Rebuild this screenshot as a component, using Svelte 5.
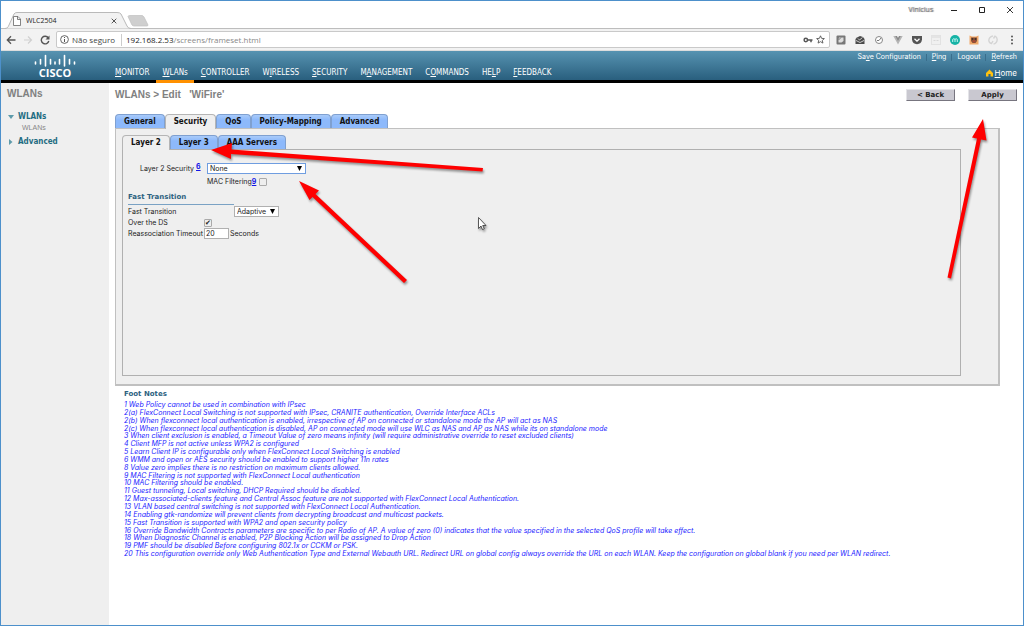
<script>
  const nav = [
    ['', 'M', 'ONITOR'],
    ['', 'W', 'LANs'],
    ['', 'C', 'ONTROLLER'],
    ['W', 'I', 'RELESS'],
    ['', 'S', 'ECURITY'],
    ['M', 'A', 'NAGEMENT'],
    ['C', 'O', 'MMANDS'],
    ['HE', 'L', 'P'],
    ['', 'F', 'EEDBACK'],
  ];
  const tabs = ['General', 'Security', 'QoS', 'Policy-Mapping', 'Advanced'];
  const subTabs = ['Layer 2', 'Layer 3', 'AAA Servers'];
  let tab = $state('Security');
  let subTab = $state('Layer 2');
  let security = $state('None');
  let transition = $state('Adaptive');
  let macFiltering = $state(false);
  let overDs = $state(true);
  let timeout = $state('20');
  const notes = [
    '1 Web Policy cannot be used in combination with IPsec',
    '2(a) FlexConnect Local Switching is not supported with IPsec, CRANITE authentication, Override Interface ACLs',
    '2(b) When flexconnect local authentication is enabled, irrespective of AP on connected or standalone mode the AP will act as NAS',
    '2(c) When flexconnect local authentication is disabled, AP on connected mode will use WLC as NAS and AP as NAS while its on standalone mode',
    '3 When client exclusion is enabled, a Timeout Value of zero means infinity (will require administrative override to reset excluded clients)',
    '4 Client MFP is not active unless WPA2 is configured',
    '5 Learn Client IP is configurable only when FlexConnect Local Switching is enabled',
    '6 WMM and open or AES security should be enabled to support higher 11n rates',
    '8 Value zero implies there is no restriction on maximum clients allowed.',
    '9 MAC Filtering is not supported with FlexConnect Local authentication',
    '10 MAC Filtering should be enabled.',
    '11 Guest tunneling, Local switching, DHCP Required should be disabled.',
    '12 Max-associated-clients feature and Central Assoc feature are not supported with FlexConnect Local Authentication.',
    '13 VLAN based central switching is not supported with FlexConnect Local Authentication.',
    '14 Enabling gtk-randomize will prevent clients from decrypting broadcast and multicast packets.',
    '15 Fast Transition is supported with WPA2 and open security policy',
    '16 Override Bandwidth Contracts parameters are specific to per Radio of AP. A value of zero (0) indicates that the value specified in the selected QoS profile will take effect.',
    '18 When Diagnostic Channel is enabled, P2P Blocking Action will be assigned to Drop Action',
    '19 PMF should be disabled Before configuring 802.1x or CCKM or PSK.',
    '20 This configuration override only Web Authentication Type and External Webauth URL. Redirect URL on global config always override the URL on each WLAN. Keep the configuration on global blank if you need per WLAN redirect.',
  ];
</script>

<div class="window">
  <div class="titlebar">
    <div class="chrome-tab">
      <svg class="tab-shape" viewBox="0 0 126 17" preserveAspectRatio="none" aria-hidden="true">
        <path d="M0 16.5 C3 16 3 15 4 13 L9 2 Q10 .5 12 .5 H112 Q115 .5 116 2 L122 14 Q123 16.500 126 16.500" fill="#f2f2f2" stroke="#b9b9b9" />
      </svg>
      <svg class="page-icon" width="8" height="10" viewBox="0 0 8 10" aria-hidden="true"><path d="M1 .5H5L7.500 3V9.500H.500V.500ZM4.500 .500V3.500H7.500" fill="#fff" stroke="#666" stroke-width=".8" /></svg>
      <span>WLC2504</span>
      <button class="plain close-tab" aria-label="Close tab"><svg width="6" height="6" viewBox="0 0 6 6"><path d="M.7 .7L5.300 5.300M5.300 .7L.7 5.300" stroke="#555" /></svg></button>
    </div>
    <button class="plain new-tab" aria-label="New tab"><svg width="22" height="12" viewBox="0 0 22 12"><path d="M1 1.500Q1 .5 3 .5H15Q16 .5 17 2L21 10Q21 11 20 11H7Q6 11 5 10Z" fill="#cfcfcf" stroke="#c0c0c0" stroke-width=".7" /></svg></button>
    <div class="controls">
      <span class="user">Vinicius</span>
      <button class="plain" aria-label="Minimize"><svg width="8" height="8" viewBox="0 0 8 8"><path d="M1 4.500H7" stroke="#222" /></svg></button>
      <button class="plain" aria-label="Maximize"><svg width="8" height="8" viewBox="0 0 8 8"><path d="M1.500 1.500H6.500V6.500H1.500Z" fill="none" stroke="#222" /></svg></button>
      <button class="plain" aria-label="Close"><svg width="8" height="8" viewBox="0 0 8 8"><path d="M1 1L7 7M7 1L1 7" stroke="#222" stroke-width=".9" /></svg></button>
    </div>
  </div>

  <div class="toolbar">
    <div class="history">
      <button class="plain" aria-label="Back"><svg width="10" height="10" viewBox="0 0 10 10"><path d="M9.500 5H1.500M5 1.300L1.300 5L5 8.700" fill="none" stroke="#555" stroke-width="1.300" /></svg></button>
      <button class="plain" aria-label="Forward"><svg width="10" height="10" viewBox="0 0 10 10"><path d="M1 5H8.500M5 1.500L8.500 5L5 8.500" fill="none" stroke="#d0d0d0" stroke-width="1.200" /></svg></button>
      <button class="plain" aria-label="Reload"><svg width="10" height="10" viewBox="0 0 10 10"><path d="M8.300 3A3.800 3.800 0 1 0 8.800 6" fill="none" stroke="#555" stroke-width="1.400" /><path d="M9.500 .5V4.500H5.500Z" fill="#555" /></svg></button>
    </div>
    <div class="address">
      <svg width="9" height="9" viewBox="0 0 9 9" aria-hidden="true"><circle cx="4.500" cy="4.500" r="3.900" fill="none" stroke="#555" stroke-width=".9" /><path d="M4.500 4V7M4.500 2V3" stroke="#555" /></svg>
      <span class="secure">Não seguro</span>
      <span class="url"><b>192.168.2.53</b>/screens/frameset.html</span>
      <svg class="key" width="10" height="8" viewBox="0 0 10 8" aria-hidden="true"><circle cx="2.800" cy="4" r="1.700" fill="none" stroke="#555" stroke-width="1.500" /><path d="M4.500 4H9.500M8 4V6.200" stroke="#555" stroke-width="1.500" /></svg>
      <svg width="9" height="9" viewBox="0 0 10 10" aria-hidden="true"><path d="M5 .9L6.200 3.700L9.300 4L7 6L7.700 9L5 7.400L2.300 9L3 6L.7 4L3.800 3.700Z" fill="none" stroke="#555" /></svg>
    </div>
    <div class="extensions">
      <svg viewBox="0 0 10 10" aria-hidden="true"><rect x=".5" y=".5" width="9" height="9" rx="1" fill="#777" /><path d="M3 2.500H7.500V6L5.500 7.500H2.500V5Z" fill="#ddd" /><path d="M2.500 5L5 2.500" stroke="#777" /></svg>
      <svg viewBox="0 0 10 10" aria-hidden="true"><path d="M.5 4L2 2.500L5 1L8 2L9.500 4V9H.500Z" fill="#4a4a4a" /><path d="M1 5.500L5 7.500L9 5.500M3 3.500L4.500 5L7.500 2.500" fill="none" stroke="#eee" stroke-width=".8" /></svg>
      <svg viewBox="0 0 10 10" aria-hidden="true"><circle cx="5" cy="5" r="3.500" fill="#fff" stroke="#888" /><path d="M3 5.500H5L7 3" fill="none" stroke="#777" /></svg>
      <svg viewBox="0 0 10 10" aria-hidden="true"><path d="M.3 1H3.500L5 4L6.500 1H9.700L5 9.500Z" fill="#b5b5b5" /><path d="M2.300 1H4L5 3L6 1H7.700L5 6Z" fill="#888" /></svg>
      <svg viewBox="0 0 10 10" aria-hidden="true"><path d="M0 1H10V4.500Q9.500 9 5 9.200Q.5 9 0 4.500Z" fill="#555" /><path d="M2.500 3.700L5 6.200L7.500 3.700" fill="none" stroke="#fff" stroke-width="1.300" /></svg>
      <svg viewBox="0 0 10 10" aria-hidden="true"><rect x=".5" y=".5" width="9" height="9" fill="#f0f0f0" stroke="#e2e2e2" /><path d="M1 2H9M2.500 5.500H4.500M5.500 5.500H7.500" stroke="#d8d8d8" /></svg>
      <svg viewBox="0 0 10 10" aria-hidden="true"><circle cx="5" cy="5" r="5" fill="#16b3a6" /><path d="M2.700 7V4.400Q3.800 3 5 4.400V7M5 4.400Q6.200 3 7.300 4.400V7" fill="none" stroke="#d8fffa" stroke-width=".9" /></svg>
      <svg viewBox="0 0 10 10" aria-hidden="true"><path d="M.5 .5L3 1.500H7L9.500 .5V9.500H.5Z" fill="#f0a868" /><path d="M2 2.500H8V6L6.500 8H3.500L2 6Z" fill="#8a5138" /><circle cx="3.500" cy="4" r=".8" fill="#222" /><circle cx="6.500" cy="4" r=".8" fill="#222" /><path d="M4.500 5.500H5.500V7H4.500Z" fill="#d8392b" /></svg>
      <svg viewBox="0 0 10 10" aria-hidden="true"><path d="M5 .8Q.8 2 .8 5.500Q1 8 3.500 8.500L5 6M5.500 9.200Q9.200 8 9.200 4.500Q9 2 7 1.200L5.500 3.500" fill="none" stroke="#d4d4d4" stroke-width="1.400" /></svg>
      <svg viewBox="0 0 10 10" aria-hidden="true"><circle cx="5" cy="1.500" r="1" fill="#555" /><circle cx="5" cy="5" r="1" fill="#555" /><circle cx="5" cy="8.500" r="1" fill="#555" /></svg>
    </div>
  </div>

  <header>
    <div class="brand">
      <svg width="42" height="13" viewBox="0 0 42 13" role="img" aria-label="Cisco bridge">
        <path d="M1.500 8V10M6.500 5.500V10M11.500 1.500V12M16.500 5.500V10M21 8V10M25.500 5.500V10M30.500 1.500V12M35.500 5.500V10M40.500 8V10" stroke="#fff" stroke-width="1.600" stroke-linecap="round" />
      </svg>
      <strong>CISCO</strong>
    </div>
    <nav aria-label="Main">
      {#each nav as [pre, key, post], i}
        <a href="#main" class:current={i === 1}>{pre}<u>{key}</u>{post}</a>
      {/each}
    </nav>
    <div class="utility">
      <div class="links">
        <a href="#save">Sa<u>v</u>e Configuration</a><i></i>
        <a href="#ping"><u>P</u>ing</a><i></i>
        <a href="#logout">Logout</a><i></i>
        <a href="#refresh"><u>R</u>efresh</a>
      </div>
      <a class="home" href="#home">
        <svg width="7" height="8" viewBox="0 0 8 8" aria-hidden="true"><path d="M4 0L8 4V8H5.200V5H2.800V8H0V4Z" fill="#ffc20e" /></svg>
        <span><u>H</u>ome</span>
      </a>
    </div>
  </header>

  <div class="body">
    <aside>
      <h2>WLANs</h2>
      <a href="#wlans"><svg width="6" height="6" viewBox="0 0 6 6" aria-hidden="true"><path d="M0 1H6L3 5Z" fill="#5d9aaa" /></svg>WLANs</a>
      <a class="child" href="#list">WLANs</a>
      <a href="#advanced"><svg width="6" height="6" viewBox="0 0 6 6" aria-hidden="true"><path d="M1 0V6L4.500 3Z" fill="#5d9aaa" /></svg>Advanced</a>
    </aside>

    <main id="main">
      <div class="heading">
        <h1>WLANs &gt; Edit &nbsp; 'WiFire'</h1>
        <div class="actions">
          <button>&lt; Back</button>
          <button>Apply</button>
        </div>
      </div>

      <div class="tabset">
        <div class="tabs" role="tablist">
          {#each tabs as name}
            <button role="tab" aria-selected={tab === name} class:active={tab === name} onclick={() => (tab = name)}>{name}</button>
          {/each}
        </div>
        <div class="panel outer">
          <div class="tabs" role="tablist">
            {#each subTabs as name}
              <button role="tab" aria-selected={subTab === name} class:active={subTab === name} onclick={() => (subTab = name)}>{name}</button>
            {/each}
          </div>
          <form class="panel inner">
            <div class="security-row">
              <label for="l2">Layer 2 Security</label>
              <a class="ref" href="#notes">6</a>
              <div class="select focus">
                <select id="l2" bind:value={security}>
                  <option>None</option>
                  <option>WPA+WPA2</option>
                </select>
                <svg width="5" height="5" viewBox="0 0 5 5" aria-hidden="true"><path d="M0 0H5L2.500 5Z" /></svg>
              </div>
            </div>
            <div class="mac-row">
              <label for="mac">MAC Filtering</label><a class="ref" href="#notes">9</a>
              <input id="mac" type="checkbox" bind:checked={macFiltering} />
            </div>
            <h3>Fast Transition</h3>
            <div class="ft-row">
              <label for="ft">Fast Transition</label>
              <div class="select small">
                <select id="ft" bind:value={transition}>
                  <option>Adaptive</option>
                  <option>Enable</option>
                  <option>Disable</option>
                </select>
                <svg width="5" height="5" viewBox="0 0 5 5" aria-hidden="true"><path d="M0 0H5L2.500 5Z" /></svg>
              </div>
            </div>
            <div class="ft-row">
              <label for="ds">Over the DS</label>
              <input id="ds" type="checkbox" bind:checked={overDs} />
            </div>
            <div class="ft-row">
              <label for="timeout">Reassociation Timeout</label>
              <input id="timeout" type="text" bind:value={timeout} />
              <span>Seconds</span>
            </div>
          </form>
        </div>
      </div>

      <section id="notes">
        <h3>Foot Notes</h3>
        <div class="notes">
          {#each notes as note}
            <p>{note}</p>
          {/each}
        </div>
      </section>
    </main>
  </div>

  <svg class="marks" width="1024" height="626" viewBox="0 0 1024 626" aria-hidden="true">
    <g fill="#fe0000">
      <path d="M211 150L232 143L231.500 149.500L483 168L482.500 171.500L231 154L231 159Z" />
      <path d="M299 181L319 190.500L315.500 194L407 280L404 283L312.500 197L309.500 200Z" />
      <path d="M983 119L986.500 140.500L981 139.500L951 278.500L947.500 277.500L977 138.500L972 137.500Z" />
    </g>
    <path d="M478.500 217.500V228.500L481 226L482.500 229.500L484.300 228.700L482.700 225.500H486Z" fill="#fff" stroke="#333" stroke-width=".8" />
  </svg>
</div>

<style>
  :global(body) { margin: 0; background: #fff; }
  * { box-sizing: border-box; }
  .window {
    position: relative;
    display: flex;
    flex-direction: column;
    min-height: 100vh;
    overflow: hidden;
    border: 1px solid #4d90cb;
    background: #fff;
    color: #222;
    font: 7px/10px Inter, "DejaVu Sans", sans-serif;
  }
  a { color: inherit; text-decoration: none; white-space: nowrap; }
  h1, h2, h3, p { margin: 0; }
  svg { display: block; flex: none; }
  .plain { display: flex; padding: 0; border: 0; background: none; }

  .titlebar { display: flex; align-items: flex-end; height: 28px; padding-left: 4px; border-bottom: 1px solid #bdbdbd; }
  .chrome-tab {
    position: relative;
    display: flex;
    align-items: center;
    width: 120px;
    height: 17px;
    margin-bottom: -1px;
    padding: 0 8px 0 8px;
    gap: 5px;
    font: 7px/10px "Open Sans", sans-serif;
  }
  .chrome-tab > * { position: relative; }
  .chrome-tab .tab-shape { position: absolute; inset: 0; width: 126px; height: 17px; }
  .close-tab { margin-left: auto; }
  .new-tab { margin: 0 0 1px 2px; }
  .controls { display: flex; align-items: center; align-self: flex-start; gap: 20px; margin: 4px 9px 0 auto; }
  .user { font: 7px/10px "Open Sans", sans-serif; color: #777; text-shadow: 1px 0 1px #888; margin-right: -3px; }

  .toolbar { display: flex; align-items: center; height: 22px; padding: 0 5px; gap: 6px; background: #f2f2f2; border-bottom: 1px solid #ddd; }
  .history { display: flex; gap: 7px; }
  .address {
    display: flex;
    align-items: center;
    flex: 1;
    height: 17px;
    padding: 0 4px 0 3px;
    gap: 3px;
    border: 1px solid #c9c9c9;
    border-radius: 2px;
    background: #fff;
    font: 8px/12px "Open Sans", sans-serif;
  }
  .secure { padding-right: 6px; border-right: 1px solid #ccc; color: #444; white-space: nowrap; }
  .url { padding-left: 1px; color: #888; }
  .url b { color: #222; font-weight: 400; }
  .key { margin-left: auto; }
  .extensions { display: flex; align-items: center; gap: 9px; }
  .extensions svg { width: 10px; height: 10px; }
  .extensions svg:last-child { margin-right: 1px; }

  header {
    display: flex;
    height: 32px;
    border-bottom: 3px solid #000;
    background: linear-gradient(#5793b1, #295f7e);
    color: #fff;
  }
  .brand { display: flex; flex-direction: column; align-items: center; width: 108px; padding-top: 3px; }
  .brand strong { font: bold 11px/12px "Open Sans", sans-serif; }
  nav { display: flex; align-items: flex-end; gap: 1px; font: 8px/12px "DejaVu Sans Condensed", "DejaVu Sans", sans-serif; }
  nav a { height: 13px; padding: 0 6px; }
  nav a.current { height: 16px; margin-bottom: -3px; border-bottom: 3px solid #ff9000; }
  .utility { display: flex; flex-direction: column; align-items: flex-end; gap: 6px; margin-left: auto; padding: 1px 6px 0 0; }
  .links { display: flex; align-items: center; gap: 5px; }
  .links i { width: 1px; height: 7px; background: #3a6e8c; }
  .home { display: flex; align-items: center; gap: 2px; font-size: 8px; }

  .body { display: flex; flex: 1; }
  aside { display: flex; flex-direction: column; width: 108px; padding: 5px 6px; background: #efefef; }
  aside h2, h1 { font: bold 10px/12px "Liberation Sans", Arial, sans-serif; color: #808080; }
  aside h2 { margin-bottom: 11px; }
  aside a { display: flex; align-items: center; gap: 4px; padding-left: 1px; font: bold 8px/12px "DejaVu Sans Condensed", "DejaVu Sans", sans-serif; color: #1f6d83; }
  aside a.child { padding: 0 0 4px 15px; font: 7px/9px "Liberation Sans", Arial, sans-serif; color: #888; }

  main { flex: 1; min-width: 0; padding: 6px 6px 0; }
  .heading { display: flex; justify-content: space-between; height: 25px; }
  h1 { white-space: pre; }
  .actions { display: flex; gap: 13px; }
  .actions button {
    width: 49px;
    height: 12px;
    padding: 0;
    border: 1px solid;
    border-color: #e4e4e8 #77757f #77757f #e4e4e8;
    background: #c9c8d0;
    color: #222;
    font: bold 7px/10px "DejaVu Sans", sans-serif;
  }
  .tabset { margin-right: 17px; }
  .tabs { display: flex; }
  .tabs button {
    height: 14px;
    padding: 0 8px;
    border: 1px solid #7fa0d0;
    border-bottom: 0;
    border-radius: 4px 4px 0 0;
    background: linear-gradient(#a9cbfa, #8db9fb 5px);
    color: #111;
    font: bold 8px/12px "DejaVu Sans Condensed", "DejaVu Sans", sans-serif;
    white-space: nowrap;
  }
  .tabs button.active { position: relative; height: 15px; margin-bottom: -1px; border-color: #b5b5b5; background: #efefef; }
  .panel { border: 1px solid #b0b0b0; background: #efefef; }
  .outer { min-height: 257px; padding: 6px 37px 8px 6px; border-width: 1px 2px 2px 1px; border-color: #c0c0c0; }
  .inner { min-height: 227px; padding: 12px 5px; }

  .security-row, .mac-row, .ft-row { display: flex; align-items: center; }
  .security-row { height: 13px; padding-left: 12px; }
  .security-row .ref { align-self: flex-start; margin: 0 auto 0 2px; line-height: 9px; }
  .security-row { width: 178px; }
  .mac-row { height: 14px; padding-left: 79px; }
  .ref { color: #1414e6; font-weight: 700; text-decoration: underline; }
  .select { display: grid; align-items: center; width: 99px; height: 11px; border: 1px solid #b0b0b0; background: #fff; }
  .select > * { grid-area: 1 / 1; }
  .select svg { justify-self: end; margin-right: 3px; pointer-events: none; }
  .select.focus { border-color: #6f9de0; }
  .select.small { width: 45px; margin-left: 1px; }
  select { width: 100%; height: 9px; padding: 0 2px; border: 0; outline: 0; background: none; appearance: none; color: #222; font: 7px/9px Inter, "DejaVu Sans", sans-serif; }
  input[type="checkbox"] { display: grid; place-items: center; width: 8px; height: 8px; margin: 0 0 0 3px; border: 1px solid #aaa; border-radius: 1px; background: #eee; appearance: none; }
  input[type="checkbox"]:checked::before { content: "✔"; font: 7px/7px "DejaVu Sans", sans-serif; color: #222; }
  .ft-row { height: 11px; }
  .ft-row label { width: 76px; white-space: nowrap; }
  .ft-row label[for="ft"] { width: 105px; }
  .ft-row input { margin-left: 0; }
  input[type="text"] { width: 25px; height: 11px; margin-right: 1px; padding: 0 1px; border: 1px solid #b0b0b0; background: #fff; color: #222; font: 7px/9px Inter, "DejaVu Sans", sans-serif; }
  h3 { font: bold 7px/10px "DejaVu Sans", sans-serif; color: #2d627f; }
  .inner h3 { width: 106px; margin: 3px 0 1px; padding-bottom: 2px; border-bottom: 1px solid #7aa2c4; }

  section { padding: 3px 0 0 9px; }
  section h3 { margin-bottom: 2px; }
  .notes { display: grid; grid-auto-rows: 1fr; height: 157px; font-style: italic; line-height: 8px; color: #1a1aff; white-space: nowrap; }
  .notes p { min-height: 0; height: 7px; }
  .marks { position: absolute; top: -1px; left: -1px; pointer-events: none; filter: drop-shadow(1px 2px 1px #0006); }
</style>
